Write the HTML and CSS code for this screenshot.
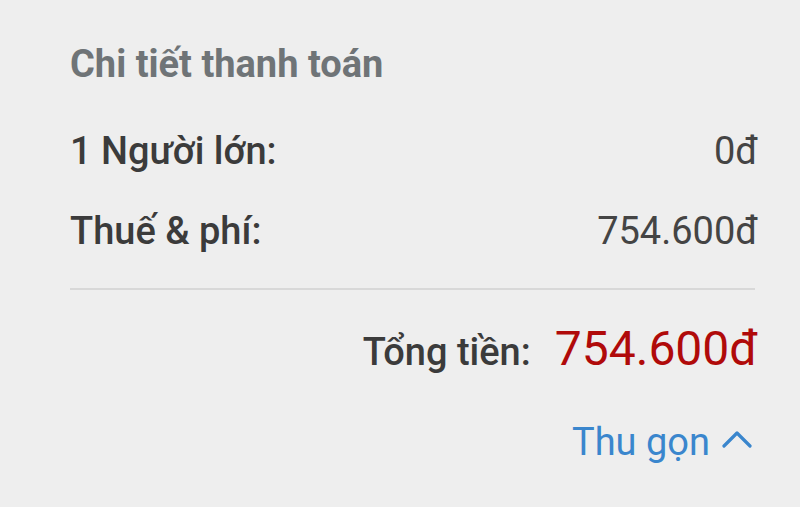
FILE: index.html
```html
<!DOCTYPE html>
<html lang="vi">
<head>
    <meta charset="UTF-8">
    <meta name="viewport" content="width=device-width, initial-scale=1.0">
    <title>Chi tiết thanh toán</title>
    <link rel="stylesheet" href="styles.css">
</head>
<body>
<div id="payment">
    <h2 class="title">Chi tiết thanh toán</h2>

    <div class="row">
        <span class="label">1 Người lớn:</span>
        <span class="value">0đ</span>
    </div>
    <div class="row">
        <span class="label">Thuế &amp; phí:</span>
        <span class="value">754.600đ</span>
    </div>

    <hr class="divider">

    <div class="total">
        <span class="total-label">Tổng tiền:</span>
        <span class="total-value">754.600đ</span>
    </div>

    <div class="collapse">
        <button class="collapse-btn">
            Thu gọn
            <svg width="30" height="18" viewBox="0 0 30 18" fill="none">
                <polyline points="2,16 15,3 28,16" stroke="currentColor" stroke-width="3.2" stroke-linecap="round" stroke-linejoin="round"/>
            </svg>
        </button>
    </div>
</div>
</body>
</html>
```

FILE: styles.css
```css
:root {
    --bg-color: #eeeeee;
    --title-color: #6f7477;
    --text-color: #3b3b3b;
    --value-color: #444444;
    --total-color: #b00a0a;
    --link-color: #3a86cd;
    --line-color: #d8d8d8;
}

body {
    background-color: var(--bg-color);
    font-family: Roboto, 'Noto Sans', sans-serif;
    margin: 0;
}

#payment {
    padding: 41px 42px 0 70px;
}

.title {
    margin: 0 0 24px;
    font-size: 38px;
    line-height: 46px;
    font-weight: 700;
    color: var(--title-color);
}

.row {
    display: flex;
    justify-content: space-between;
    font-size: 38px;
    line-height: 80px;
}

.label {
    font-weight: 500;
    color: var(--text-color);
}

.value {
    color: var(--value-color);
}

.divider {
    border: none;
    height: 2px;
    background-color: var(--line-color);
    margin: 17px 3px 0 0;
}

.total {
    display: flex;
    justify-content: flex-end;
    align-items: baseline;
    gap: 24px;
    margin-top: 29px;
    line-height: 60px;
}

.total-label {
    font-size: 38px;
    font-weight: 500;
    color: var(--text-color);
}

.total-value {
    font-size: 48px;
    color: var(--total-color);
}

.collapse {
    display: flex;
    justify-content: flex-end;
    margin-top: 35px;
}

.collapse-btn {
    display: flex;
    align-items: center;
    gap: 12px;
    padding: 0;
    border: none;
    background: none;
    font-family: inherit;
    font-size: 38px;
    line-height: 50px;
    color: var(--link-color);
    cursor: pointer;
}

.collapse-btn svg {
    margin-right: 6px;
    margin-top: -6px;
}
```
